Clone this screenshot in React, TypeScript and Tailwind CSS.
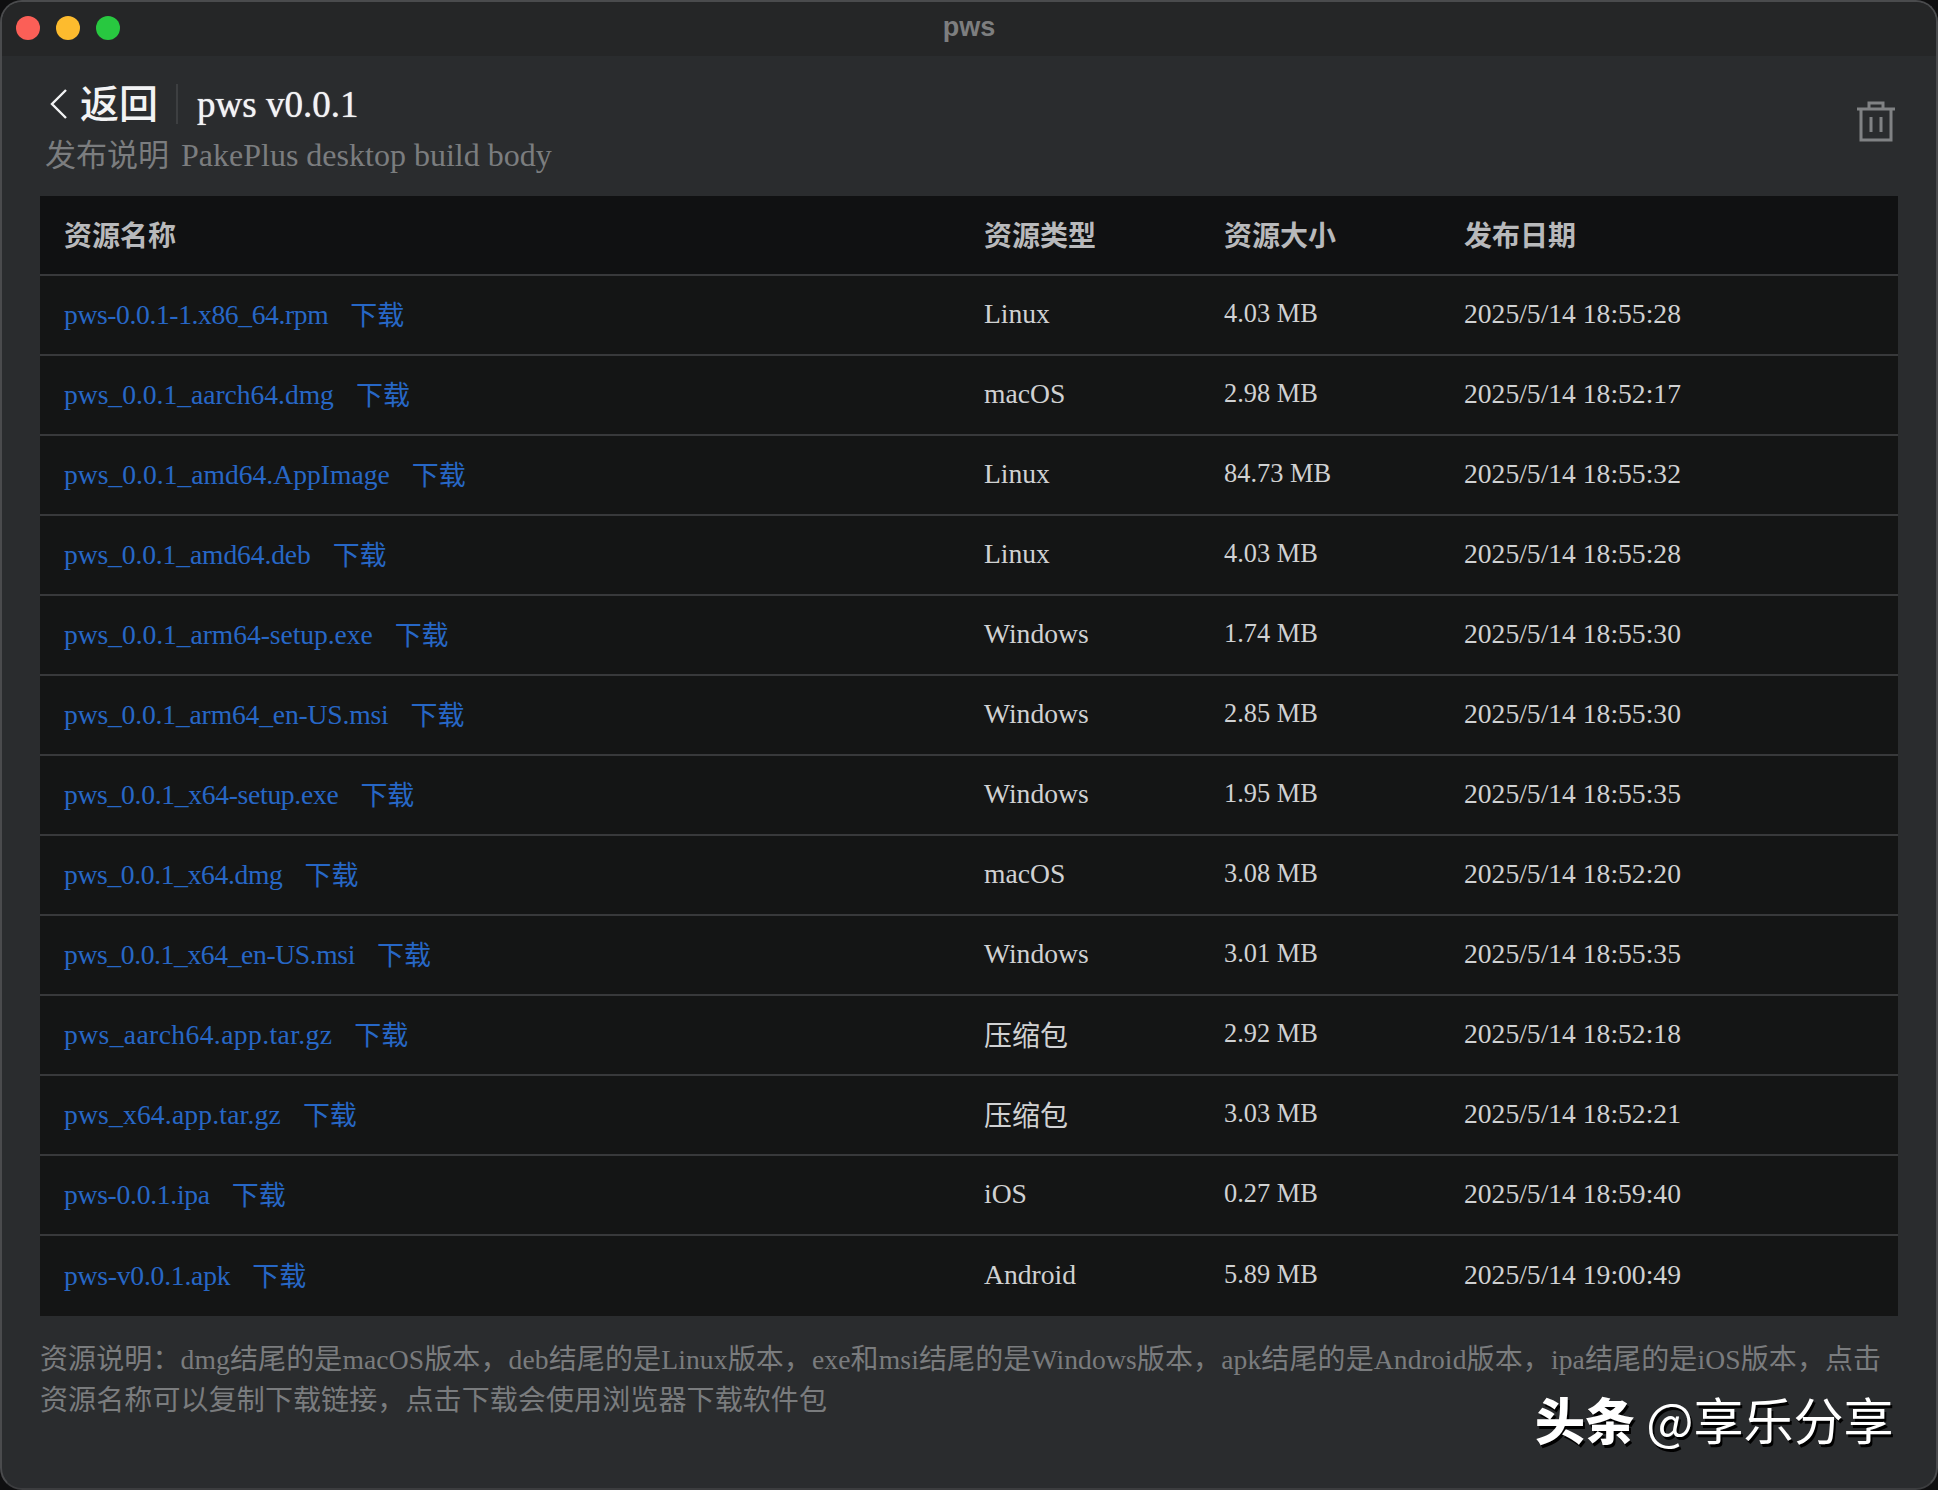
import React from "react";

const rows: [string, string, string, string, number][] = [
  ["pws-0.0.1-1.x86_64.rpm", "Linux", "4.03 MB", "2025/5/14 18:55:28", -0.39],
  ["pws_0.0.1_aarch64.dmg", "macOS", "2.98 MB", "2025/5/14 18:52:17", -0.03],
  ["pws_0.0.1_amd64.AppImage", "Linux", "84.73 MB", "2025/5/14 18:55:32", 0],
  ["pws_0.0.1_amd64.deb", "Linux", "4.03 MB", "2025/5/14 18:55:28", -0.13],
  ["pws_0.0.1_arm64-setup.exe", "Windows", "1.74 MB", "2025/5/14 18:55:30", -0.07],
  ["pws_0.0.1_arm64_en-US.msi", "Windows", "2.85 MB", "2025/5/14 18:55:30", -0.17],
  ["pws_0.0.1_x64-setup.exe", "Windows", "1.95 MB", "2025/5/14 18:55:35", -0.3],
  ["pws_0.0.1_x64.dmg", "macOS", "3.08 MB", "2025/5/14 18:52:20", -0.36],
  ["pws_0.0.1_x64_en-US.msi", "Windows", "3.01 MB", "2025/5/14 18:55:35", -0.38],
  ["pws_aarch64.app.tar.gz", "压缩包", "2.92 MB", "2025/5/14 18:52:18", 0.39],
  ["pws_x64.app.tar.gz", "压缩包", "3.03 MB", "2025/5/14 18:52:21", 0.17],
  ["pws-0.0.1.ipa", "iOS", "0.27 MB", "2025/5/14 18:59:40", -0.28],
  ["pws-v0.0.1.apk", "Android", "5.89 MB", "2025/5/14 19:00:49", -0.22],
];

const serif = "font-['Liberation_Serif','Noto_Sans_CJK_SC',serif]";

function Mixed({ text }: { text: string }) {
  const parts = text.split(/([\u4e00-\u9fff，：]+)/);
  return (
    <>
      {parts.map((p, i) =>
        i % 2 === 1 ? (
          <span key={i} className="text-[28px]">
            {p}
          </span>
        ) : (
          <span key={i}>{p}</span>
        )
      )}
    </>
  );
}

export default function App() {
  return (
    <div className={`relative h-[1490px] w-[1938px] overflow-hidden bg-[#0f0f10] ${serif}`}>
      <div className="flex h-full flex-col overflow-hidden rounded-[22px] border-2 border-[#4a4b4d] border-b-[#3c3d3f] bg-[#2a2c2e]">
        <div className="relative flex h-[54px] shrink-0 items-center bg-[#252627] pb-[2px] pl-[14px]">
          <div className="flex gap-[16px]">
            <span className="h-[24px] w-[24px] rounded-full bg-[#fb5f57]" />
            <span className="h-[24px] w-[24px] rounded-full bg-[#fdbb2e]" />
            <span className="h-[24px] w-[24px] rounded-full bg-[#28c840]" />
          </div>
          <span className="absolute left-0 right-0 top-[5px] text-center font-['Liberation_Sans',sans-serif] text-[27px] font-bold text-[#7d7e7f]">
            pws
          </span>
        </div>
        <div className="flex h-[140px] shrink-0 items-start justify-between pl-[38px] pr-[40px] pt-[24px]">
          <div className="flex flex-col">
            <div className="flex h-[48px] items-center text-[#f2f3f4]">
              <svg width="24" height="32" viewBox="0 0 24 32" fill="none" stroke="currentColor" strokeWidth="2.4" className="ml-[7px]">
                <path d="M19 2 5 16l14 14" />
              </svg>
              <span className="ml-[9px] text-[39px] font-medium leading-none">返回</span>
              <span className="ml-[18px] mr-[19px] h-[40px] w-[2px] bg-[#3d3f41]" />
              <span className="text-[37px] leading-none [text-shadow:0_0_1px_#f2f3f4]">pws v0.0.1</span>
            </div>
            <div className="ml-[5px] mt-[7px] text-[32px] leading-[40px] text-[#7b7d7f]">
              <span className="mr-[4px] text-[31px]">发布说明</span> PakePlus desktop build body
            </div>
          </div>
          <svg width="40" height="42" viewBox="0 0 40 42" fill="none" stroke="#808284" strokeWidth="3" className="mt-[20px]">
            <path d="M1 9h38M13 9V3h14v6M5 9v31h30V9M15 17v15M25 17v15" />
          </svg>
        </div>
        <div className="ml-[38px] w-[1858px] shrink-0 bg-[#141515] text-[27.6px] text-[#d0d1d2]">
          <div className="grid h-[80px] grid-cols-[920px_240px_240px_1fr] items-center border-b-2 border-[#38393b] bg-[#101112] pt-[4px] text-[28px] font-bold text-[#b8b9bb]">
            <div className="pl-[24px]">资源名称</div>
            <div className="pl-[24px]">资源类型</div>
            <div className="pl-[24px]">资源大小</div>
            <div className="pl-[24px]">发布日期</div>
          </div>
          {rows.map((r, i) => (
            <div
              key={r[0]}
              className={`grid h-[80px] grid-cols-[920px_240px_240px_1fr] items-center ${i < rows.length - 1 ? "border-b-2 border-[#38393b]" : ""}`}
            >
              <div className="flex items-center gap-[22px] pb-[1px] pl-[24px] text-[#2767c6]">
                <span style={{ letterSpacing: r[4] }}>{r[0]}</span>
                <span className="pt-[3px] text-[27px]">下载</span>
              </div>
              <div className={`pb-[2px] pl-[24px] ${r[1] === "压缩包" ? "pt-[5px]" : ""}`}>
                <Mixed text={r[1]} />
              </div>
              <div className="pb-[2px] pl-[24px] text-[26.4px]">{r[2]}</div>
              <div className="pb-[2px] pl-[24px]">{r[3]}</div>
            </div>
          ))}
        </div>
        <div className="ml-[38px] mt-[23px] text-[27.6px] leading-[41px] tracking-[0.11px] text-[#7a7c7e]">
          <div><Mixed text="资源说明：dmg结尾的是macOS版本，deb结尾的是Linux版本，exe和msi结尾的是Windows版本，apk结尾的是Android版本，ipa结尾的是iOS版本，点击" /></div>
          <div><Mixed text="资源名称可以复制下载链接，点击下载会使用浏览器下载软件包" /></div>
        </div>
      </div>
      <div className="absolute left-[1535px] top-[1387px] font-['Noto_Sans_CJK_SC',sans-serif] text-[50px] leading-[62px] text-white [text-shadow:2px_3px_0_#000]">
        <span className="font-black">头条</span> @享乐分享
      </div>
    </div>
  );
}
